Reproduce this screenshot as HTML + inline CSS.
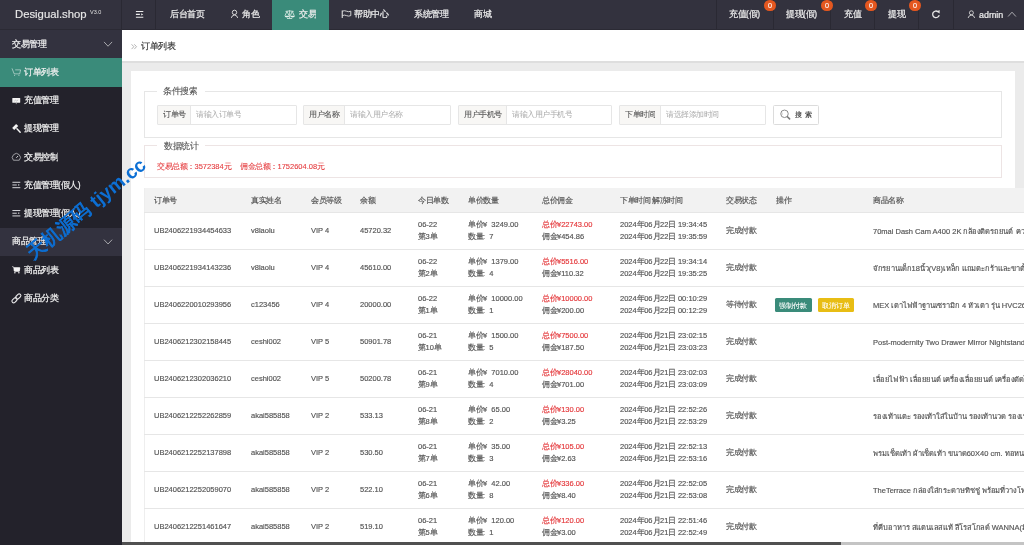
<!DOCTYPE html>
<html><head><meta charset="utf-8"><title>订单列表</title>
<style>
*{margin:0;padding:0;box-sizing:border-box}
html,body{width:1024px;height:545px;overflow:hidden;background:#ebebeb}
#root{position:absolute;left:0;top:0;width:1024px;height:545px;overflow:hidden;will-change:transform;background:#ebebeb;font-family:"Liberation Sans",sans-serif}
.abs{position:absolute}
.tx{position:absolute;white-space:nowrap;transform:scale(0.5);transform-origin:0 0}
.wm{position:absolute;left:35px;top:243px;font-size:19px;line-height:19px;color:#0c6fd4;white-space:nowrap;transform-origin:0 100%;transform:rotate(-39deg);font-weight:bold}
</style></head><body><div id="root">
<div class="abs" style="left:0.00px;top:0.00px;width:1024.00px;height:30.00px;background:#33323e"></div>
<div class="abs" style="left:0.00px;top:29.20px;width:1024.00px;height:0.80px;background:#2b2a34"></div>
<div class="abs" style="left:121.20px;top:0.00px;width:1.00px;height:29.20px;background:#2a2933"></div>
<div class="abs" style="left:155.00px;top:0.00px;width:1.00px;height:29.20px;background:#2a2933"></div>
<div class="abs" style="left:716.10px;top:0.00px;width:1.00px;height:29.20px;background:#2a2933"></div>
<div class="abs" style="left:773.30px;top:0.00px;width:1.00px;height:29.20px;background:#2a2933"></div>
<div class="abs" style="left:830.00px;top:0.00px;width:1.00px;height:29.20px;background:#2a2933"></div>
<div class="abs" style="left:873.90px;top:0.00px;width:1.00px;height:29.20px;background:#2a2933"></div>
<div class="abs" style="left:918.20px;top:0.00px;width:1.00px;height:29.20px;background:#2a2933"></div>
<div class="abs" style="left:952.50px;top:0.00px;width:1.00px;height:29.20px;background:#2a2933"></div>
<div class="abs" style="left:272.00px;top:0.00px;width:57.30px;height:30.00px;background:#3a8b7a"></div>
<div class="tx " style="left:15.40px;top:5.80px;font-size:22.60px;line-height:34.00px;color:#e8e8e8;-webkit-text-stroke:0.30px #e8e8e8">Desigual.shop</div>
<div class="tx " style="left:90.40px;top:8.00px;font-size:11.00px;line-height:16.00px;color:#e0e0e0">V3.0</div>
<div class="tx " style="left:169.50px;top:8.10px;font-size:17.00px;line-height:26.00px;color:#ececec;-webkit-text-stroke:0.44px #ececec">后台首页</div>
<div class="tx " style="left:242.20px;top:8.10px;font-size:17.00px;line-height:26.00px;color:#ececec;-webkit-text-stroke:0.44px #ececec">角色</div>
<div class="tx " style="left:299.20px;top:8.10px;font-size:17.00px;line-height:26.00px;color:#ececec;-webkit-text-stroke:0.44px #ececec">交易</div>
<div class="tx " style="left:354.00px;top:8.10px;font-size:17.00px;line-height:26.00px;color:#ececec;-webkit-text-stroke:0.44px #ececec">帮助中心</div>
<div class="tx " style="left:414.40px;top:8.10px;font-size:17.00px;line-height:26.00px;color:#ececec;-webkit-text-stroke:0.44px #ececec">系统管理</div>
<div class="tx " style="left:474.30px;top:8.10px;font-size:17.00px;line-height:26.00px;color:#ececec;-webkit-text-stroke:0.44px #ececec">商城</div>
<div class="tx " style="left:729.20px;top:8.10px;font-size:17.00px;line-height:26.00px;color:#ececec;-webkit-text-stroke:0.44px #ececec">充值(假)</div>
<div class="tx " style="left:786.40px;top:8.10px;font-size:17.00px;line-height:26.00px;color:#ececec;-webkit-text-stroke:0.44px #ececec">提现(假)</div>
<div class="tx " style="left:843.90px;top:8.10px;font-size:17.00px;line-height:26.00px;color:#ececec;-webkit-text-stroke:0.44px #ececec">充值</div>
<div class="tx " style="left:887.90px;top:8.10px;font-size:17.00px;line-height:26.00px;color:#ececec;-webkit-text-stroke:0.44px #ececec">提现</div>
<div class="tx " style="left:978.60px;top:7.65px;font-size:17.80px;line-height:27.00px;color:#ececec;-webkit-text-stroke:0.44px #ececec">admin</div>
<div class="abs" style="left:763.80px;top:-0.4px;width:11.8px;height:11.8px;border-radius:50%;background:#e4571f"></div>
<div class="tx " style="left:767.65px;top:0.00px;font-size:14.40px;line-height:22.00px;color:#fff;-webkit-text-stroke:0.20px #fff">0</div>
<div class="abs" style="left:821.10px;top:-0.4px;width:11.8px;height:11.8px;border-radius:50%;background:#e4571f"></div>
<div class="tx " style="left:824.95px;top:0.00px;font-size:14.40px;line-height:22.00px;color:#fff;-webkit-text-stroke:0.20px #fff">0</div>
<div class="abs" style="left:865.10px;top:-0.4px;width:11.8px;height:11.8px;border-radius:50%;background:#e4571f"></div>
<div class="tx " style="left:868.95px;top:0.00px;font-size:14.40px;line-height:22.00px;color:#fff;-webkit-text-stroke:0.20px #fff">0</div>
<div class="abs" style="left:909.00px;top:-0.4px;width:11.8px;height:11.8px;border-radius:50%;background:#e4571f"></div>
<div class="tx " style="left:912.85px;top:0.00px;font-size:14.40px;line-height:22.00px;color:#fff;-webkit-text-stroke:0.20px #fff">0</div>
<svg class="abs" style="left:0;top:0" width="1024" height="30" viewBox="0 0 1024 30">
<path d="M135.9 11.5 H143.3 M135.9 14.4 H139.9 M135.9 17.3 H143.3" fill="none" stroke="#ececec" stroke-width="1.1"/><path d="M141.2 13.3 L143.2 14.4 L141.2 15.5 Z" fill="#ececec"/>
<g fill="none" stroke="#e6e6e6" stroke-width="0.9"><circle cx="234.5" cy="12.4" r="2.2"/><path d="M231.3 17.9 Q232.1 15.1 234.5 15 Q236.9 15.1 237.7 17.9"/></g>
<g fill="none" stroke="#dfeee9" stroke-width="0.8"><path d="M285.5 11.4 Q289.6 10.4 293.7 11.4 M289.6 10.2 V18.2 M287 18.5 H292.2 M287 11.3 L285 15.6 M287 11.3 L289 15.6 M292.2 11.3 L290.4 15.6 M292.2 11.3 L294.2 15.6"/></g><path d="M284.6 15.7 H289.3 A2.35 1.7 0 0 1 284.6 15.7 Z M290.2 15.7 H294.9 A2.35 1.7 0 0 1 290.2 15.7 Z" fill="#e4f0ec"/>
<path d="M342.25 10.5 V18" stroke="#e0e0e0" stroke-width="1.1"/><path d="M342.3 11.2 Q344.5 10.2 346.5 11.2 Q348.5 12.2 350.8 11.2 V15.6 Q348.5 16.6 346.5 15.6 Q344.5 14.6 342.3 15.6" fill="none" stroke="#e0e0e0" stroke-width="0.9"/>
<path d="M939.2 15.1 A3.3 3.3 0 1 1 938 11.7" fill="none" stroke="#e6e6e6" stroke-width="1.3"/><path d="M936.4 11.5 L939.6 10.1 L939.6 13.5 Z" fill="#e6e6e6"/>
<g fill="none" stroke="#e0e0e0" stroke-width="0.85"><circle cx="971.4" cy="12.8" r="2"/><path d="M968.1 18 Q968.7 15.3 971.4 15.1 Q974.1 15.3 974.7 18"/></g>
<path d="M1008.1 16.5 L1012 12.2 L1015.9 16.5" fill="none" stroke="#b8b8bc" stroke-width="0.9"/>
</svg>
<div class="abs" style="left:0.00px;top:30.00px;width:122.00px;height:515.00px;background:#23222b"></div>
<div class="abs" style="left:0.00px;top:30.00px;width:122.00px;height:28.25px;background:#33323f"></div>
<div class="abs" style="left:0.00px;top:58.25px;width:122.00px;height:28.25px;background:#3a8b7a"></div>
<div class="abs" style="left:0.00px;top:227.75px;width:122.00px;height:28.25px;background:#33323f"></div>
<div class="tx " style="left:12.00px;top:37.52px;font-size:17.00px;line-height:26.00px;color:#f0f0f0;-webkit-text-stroke:0.44px #f0f0f0">交易管理</div>
<div class="tx " style="left:24.20px;top:65.78px;font-size:17.00px;line-height:26.00px;color:#f0f0f0;-webkit-text-stroke:0.44px #f0f0f0">订单列表</div>
<div class="tx " style="left:24.20px;top:94.03px;font-size:17.00px;line-height:26.00px;color:#f0f0f0;-webkit-text-stroke:0.44px #f0f0f0">充值管理</div>
<div class="tx " style="left:24.20px;top:122.28px;font-size:17.00px;line-height:26.00px;color:#f0f0f0;-webkit-text-stroke:0.44px #f0f0f0">提现管理</div>
<div class="tx " style="left:24.20px;top:150.53px;font-size:17.00px;line-height:26.00px;color:#f0f0f0;-webkit-text-stroke:0.44px #f0f0f0">交易控制</div>
<div class="tx " style="left:24.20px;top:178.78px;font-size:17.00px;line-height:26.00px;color:#f0f0f0;-webkit-text-stroke:0.44px #f0f0f0">充值管理(假人)</div>
<div class="tx " style="left:24.20px;top:207.03px;font-size:17.00px;line-height:26.00px;color:#f0f0f0;-webkit-text-stroke:0.44px #f0f0f0">提现管理(假人)</div>
<div class="tx " style="left:12.00px;top:235.28px;font-size:17.00px;line-height:26.00px;color:#f0f0f0;-webkit-text-stroke:0.44px #f0f0f0">商品管理</div>
<div class="tx " style="left:24.20px;top:263.52px;font-size:17.00px;line-height:26.00px;color:#f0f0f0;-webkit-text-stroke:0.44px #f0f0f0">商品列表</div>
<div class="tx " style="left:24.20px;top:291.77px;font-size:17.00px;line-height:26.00px;color:#f0f0f0;-webkit-text-stroke:0.44px #f0f0f0">商品分类</div>
<svg class="abs" style="left:0;top:0" width="122" height="545" viewBox="0 0 122 545"><path d="M104 41.92 L108.05 46.23 L112.1 41.92" fill="none" stroke="#b4b4b8" stroke-width="0.9"/><path d="M104 239.68 L108.05 243.97 L112.1 239.68" fill="none" stroke="#b4b4b8" stroke-width="0.9"/><g transform="translate(0,-0.03)" fill="none" stroke="rgba(255,255,255,0.62)" stroke-width="0.8"><path d="M12 68.4 L14.2 73.9 H19.7 L20.6 69.9 H15.2"/><circle cx="14.6" cy="75.3" r="0.55" fill="rgba(255,255,255,0.7)" stroke="none"/><circle cx="18.9" cy="75.3" r="0.55" fill="rgba(255,255,255,0.7)" stroke="none"/></g><g transform="translate(0,0.83)"><rect x="12.3" y="97.2" width="7.9" height="4.8" rx="0.5" fill="#f4f4f4"/><rect x="15.8" y="101.9" width="0.9" height="1.4" fill="#999"/><path d="M14.2 100.4 L15.6 99.3 L16.6 100.2 L18.2 99" stroke="#9a9aa0" stroke-width="0.5" fill="none"/></g><g transform="translate(0,-0.03)"><path d="M18.24 126.08 L16.12 123.96 L12.16 127.92 L14.28 130.04 Z" fill="#f4f4f4"/><path d="M16.9 128.7 L20.2 132.3" stroke="#f4f4f4" stroke-width="1.4" stroke-linecap="round"/></g><g transform="translate(0,0.03)" fill="none"><path d="M13.4 160.2 A4 4 0 1 1 19.3 160.2 Z" stroke="#a9a9ae" stroke-width="0.9"/><path d="M16.3 157.8 L18.1 155.9" stroke="#d0d0d4" stroke-width="1"/></g><g transform="translate(0,185.38)" fill="#d4d4d8"><rect x="12.4" y="-3.6" width="7.9" height="1"/><rect x="12.4" y="-0.9" width="4.4" height="1"/><rect x="18.1" y="-1.1" width="1.2" height="1.3"/><rect x="12.4" y="1.8" width="7.9" height="1"/></g><g transform="translate(0,213.62)" fill="#d4d4d8"><rect x="12.4" y="-3.6" width="7.9" height="1"/><rect x="12.4" y="-0.9" width="4.4" height="1"/><rect x="18.1" y="-1.1" width="1.2" height="1.3"/><rect x="12.4" y="1.8" width="7.9" height="1"/></g><g transform="translate(0,270.12)"><path d="M12 -3.6 L13.6 -3.2 L14.6 1.4 H19.2 L20 -2.4 H13.9" fill="#f4f4f4" stroke="#f4f4f4" stroke-width="0.5"/><rect x="13.8" y="-2.6" width="5.9" height="3.4" fill="#f4f4f4"/><circle cx="14.9" cy="2.6" r="0.75" fill="#f4f4f4"/><circle cx="18.9" cy="2.6" r="0.75" fill="#f4f4f4"/></g><g transform="translate(16.4,298.38) rotate(-45)" fill="none" stroke="#e8e8ea" stroke-width="1.1"><rect x="-5.6" y="-1.7" width="6" height="3.4" rx="1.7"/><rect x="-0.4" y="-1.7" width="6" height="3.4" rx="1.7"/></g></svg>
<div class="abs" style="left:122.00px;top:30.00px;width:902.00px;height:515.00px;background:#ebebeb"></div>
<div class="abs" style="left:122.00px;top:61.00px;width:902.00px;height:2.30px;background:#dedede"></div>
<div class="abs" style="left:122.00px;top:30.00px;width:902.00px;height:31.00px;background:#fff"></div>
<svg class="abs" style="left:130px;top:43px" width="8" height="8" viewBox="130 43 8 8"><path d="M131.6 44.3 L133.8 46.7 L131.6 49.1 M134.3 44.3 L136.5 46.7 L134.3 49.1" fill="none" stroke="#a0a0a0" stroke-width="0.8"/></svg>
<div class="tx " style="left:141.00px;top:39.80px;font-size:17.00px;line-height:26.00px;color:#333;-webkit-text-stroke:0.30px #333">订单列表</div>
<div class="abs" style="left:130.50px;top:70.60px;width:884.50px;height:117.00px;background:#fff"></div>
<div class="abs" style="left:130.50px;top:187.60px;width:913.50px;height:360.00px;background:#fff"></div>
<div class="abs" style="left:144.2px;top:91.1px;width:858px;height:46.6px;border:1px solid #e6e6e6"></div>
<div class="abs" style="left:144.2px;top:145.3px;width:858px;height:32.4px;border:1px solid #ede4e4"></div>
<div class="abs" style="left:157.00px;top:86.00px;width:48.00px;height:10.00px;background:#fff"></div>
<div class="abs" style="left:157.00px;top:140.00px;width:48.00px;height:10.00px;background:#fff"></div>
<div class="tx " style="left:163.40px;top:84.80px;font-size:17.00px;line-height:26.00px;color:#555;-webkit-text-stroke:0.24px #555">条件搜索</div>
<div class="tx " style="left:163.60px;top:140.00px;font-size:17.00px;line-height:26.00px;color:#555;-webkit-text-stroke:0.24px #555">数据统计</div>
<div class="abs" style="left:157.30px;top:105.2px;width:139.40px;height:20.2px;border:1px solid #e6e6e6;border-radius:1px;background:#fff"></div>
<div class="abs" style="left:158.30px;top:106.20px;width:31.60px;height:18.20px;background:#f8f7f5"></div>
<div class="abs" style="left:189.90px;top:106.20px;width:0.90px;height:18.20px;background:#e6e6e6"></div>
<div class="tx " style="left:163.20px;top:109.10px;font-size:15.00px;line-height:22.00px;color:#555;-webkit-text-stroke:0.20px #555">订单号</div>
<div class="tx " style="left:195.90px;top:109.10px;font-size:15.00px;line-height:22.00px;color:#aaa">请输入订单号</div>
<div class="abs" style="left:303.30px;top:105.2px;width:147.70px;height:20.2px;border:1px solid #e6e6e6;border-radius:1px;background:#fff"></div>
<div class="abs" style="left:304.30px;top:106.20px;width:40.00px;height:18.20px;background:#f8f7f5"></div>
<div class="abs" style="left:344.30px;top:106.20px;width:0.90px;height:18.20px;background:#e6e6e6"></div>
<div class="tx " style="left:309.20px;top:109.10px;font-size:15.00px;line-height:22.00px;color:#555;-webkit-text-stroke:0.20px #555">用户名称</div>
<div class="tx " style="left:350.30px;top:109.10px;font-size:15.00px;line-height:22.00px;color:#aaa">请输入用户名称</div>
<div class="abs" style="left:457.80px;top:105.2px;width:154.20px;height:20.2px;border:1px solid #e6e6e6;border-radius:1px;background:#fff"></div>
<div class="abs" style="left:458.80px;top:106.20px;width:47.30px;height:18.20px;background:#f8f7f5"></div>
<div class="abs" style="left:506.10px;top:106.20px;width:0.90px;height:18.20px;background:#e6e6e6"></div>
<div class="tx " style="left:463.70px;top:109.10px;font-size:15.00px;line-height:22.00px;color:#555;-webkit-text-stroke:0.20px #555">用户手机号</div>
<div class="tx " style="left:512.10px;top:109.10px;font-size:15.00px;line-height:22.00px;color:#aaa">请输入用户手机号</div>
<div class="abs" style="left:619.00px;top:105.2px;width:147.30px;height:20.2px;border:1px solid #e6e6e6;border-radius:1px;background:#fff"></div>
<div class="abs" style="left:620.00px;top:106.20px;width:39.50px;height:18.20px;background:#f8f7f5"></div>
<div class="abs" style="left:659.50px;top:106.20px;width:0.90px;height:18.20px;background:#e6e6e6"></div>
<div class="tx " style="left:624.90px;top:109.10px;font-size:15.00px;line-height:22.00px;color:#555;-webkit-text-stroke:0.20px #555">下单时间</div>
<div class="tx " style="left:665.50px;top:109.10px;font-size:15.00px;line-height:22.00px;color:#aaa">请选择添加时间</div>
<div class="abs" style="left:773px;top:105.1px;width:46px;height:20.2px;border:1px solid #dcdcdc;border-radius:1.5px;background:#fff"></div>
<svg class="abs" style="left:778px;top:108px" width="14" height="13" viewBox="778 108 14 13"><circle cx="784.5" cy="113.8" r="3.75" fill="none" stroke="#8c8c8c" stroke-width="1.0"/><path d="M787.4 116.7 L789.6 118.9" stroke="#7a7a7a" stroke-width="1.6" stroke-linecap="round"/><path d="M782.2 112.6 V114.9" stroke="#b0b0b0" stroke-width="0.6"/></svg>
<div class="tx " style="left:795.00px;top:108.90px;font-size:14.80px;line-height:22.00px;color:#333;-webkit-text-stroke:0.24px #333">搜</div>
<div class="tx " style="left:804.90px;top:108.90px;font-size:14.80px;line-height:22.00px;color:#333;-webkit-text-stroke:0.24px #333">索</div>
<div class="tx " style="left:157.20px;top:160.70px;font-size:15.00px;line-height:22.00px;color:#e4393c;-webkit-text-stroke:0.16px #e4393c">交易总额：3572384元</div>
<div class="tx " style="left:240.20px;top:160.70px;font-size:15.00px;line-height:22.00px;color:#e4393c;-webkit-text-stroke:0.16px #e4393c">佣金总额：1752604.08元</div>
<div class="abs" style="left:144.30px;top:188.20px;width:899.70px;height:24.00px;background:#f2f2f2"></div>
<div class="abs" style="left:144.30px;top:188.20px;width:0.80px;height:360.00px;background:#eeeeee"></div>
<div class="tx " style="left:153.90px;top:194.80px;font-size:15.00px;line-height:22.00px;color:#555;-webkit-text-stroke:0.32px #555">订单号</div>
<div class="tx " style="left:250.60px;top:194.80px;font-size:15.00px;line-height:22.00px;color:#555;-webkit-text-stroke:0.32px #555">真实姓名</div>
<div class="tx " style="left:311.40px;top:194.80px;font-size:15.00px;line-height:22.00px;color:#555;-webkit-text-stroke:0.32px #555">会员等级</div>
<div class="tx " style="left:360.00px;top:194.80px;font-size:15.00px;line-height:22.00px;color:#555;-webkit-text-stroke:0.32px #555">余额</div>
<div class="tx " style="left:418.40px;top:194.80px;font-size:15.00px;line-height:22.00px;color:#555;-webkit-text-stroke:0.32px #555">今日单数</div>
<div class="tx " style="left:468.00px;top:194.80px;font-size:15.00px;line-height:22.00px;color:#555;-webkit-text-stroke:0.32px #555">单价数量</div>
<div class="tx " style="left:541.60px;top:194.80px;font-size:15.00px;line-height:22.00px;color:#555;-webkit-text-stroke:0.32px #555">总价佣金</div>
<div class="tx " style="left:619.80px;top:194.80px;font-size:15.00px;line-height:22.00px;color:#555;-webkit-text-stroke:0.32px #555">下单时间 解冻时间</div>
<div class="tx " style="left:726.40px;top:194.80px;font-size:15.00px;line-height:22.00px;color:#555;-webkit-text-stroke:0.32px #555">交易状态</div>
<div class="tx " style="left:775.50px;top:194.80px;font-size:15.00px;line-height:22.00px;color:#555;-webkit-text-stroke:0.32px #555">操作</div>
<div class="tx " style="left:873.40px;top:194.80px;font-size:15.00px;line-height:22.00px;color:#555;-webkit-text-stroke:0.32px #555">商品名称</div>
<div class="abs" style="left:144.30px;top:212.20px;width:899.70px;height:0.90px;background:#e6e6e6"></div>
<div class="tx " style="left:153.90px;top:225.25px;font-size:15.00px;line-height:22.00px;color:#555;-webkit-text-stroke:0.32px #555">UB2406221934454633</div>
<div class="tx " style="left:250.60px;top:225.25px;font-size:15.00px;line-height:22.00px;color:#555;-webkit-text-stroke:0.32px #555">v8laolu</div>
<div class="tx " style="left:311.40px;top:225.25px;font-size:15.00px;line-height:22.00px;color:#555;-webkit-text-stroke:0.32px #555">VIP 4</div>
<div class="tx " style="left:360.00px;top:225.25px;font-size:15.00px;line-height:22.00px;color:#555;-webkit-text-stroke:0.32px #555">45720.32</div>
<div class="tx " style="left:418.40px;top:218.70px;font-size:15.00px;line-height:22.00px;color:#555;-webkit-text-stroke:0.32px #555">06-22</div>
<div class="tx " style="left:418.40px;top:230.50px;font-size:15.00px;line-height:22.00px;color:#555;-webkit-text-stroke:0.32px #555">第3单</div>
<div class="tx " style="left:468.00px;top:218.70px;font-size:15.00px;line-height:22.00px;color:#555;-webkit-text-stroke:0.32px #555">单价¥&nbsp; 3249.00</div>
<div class="tx " style="left:468.00px;top:230.50px;font-size:15.00px;line-height:22.00px;color:#555;-webkit-text-stroke:0.32px #555">数量:&nbsp;&nbsp;7</div>
<div class="tx " style="left:541.60px;top:218.70px;font-size:15.00px;line-height:22.00px;color:#e4393c;-webkit-text-stroke:0.32px #e4393c">总价¥22743.00</div>
<div class="tx " style="left:541.60px;top:230.50px;font-size:15.00px;line-height:22.00px;color:#555;-webkit-text-stroke:0.32px #555">佣金¥454.86</div>
<div class="tx " style="left:619.80px;top:218.70px;font-size:15.00px;line-height:22.00px;color:#555;-webkit-text-stroke:0.32px #555">2024年06月22日 19:34:45</div>
<div class="tx " style="left:619.80px;top:230.50px;font-size:15.00px;line-height:22.00px;color:#555;-webkit-text-stroke:0.32px #555">2024年06月22日 19:35:59</div>
<div class="tx " style="left:726.40px;top:225.25px;font-size:15.00px;line-height:22.00px;color:#555;-webkit-text-stroke:0.32px #555">完成付款</div>
<div class="tx " style="left:873.40px;top:225.85px;font-size:15.00px;line-height:22.00px;color:#555;-webkit-text-stroke:0.32px #555">70mai Dash Cam A400 2K กล้องติดรถยนต์ ความละเอียด 2K</div>
<div class="abs" style="left:144.30px;top:249.20px;width:899.70px;height:0.90px;background:#e6e6e6"></div>
<div class="tx " style="left:153.90px;top:262.25px;font-size:15.00px;line-height:22.00px;color:#555;-webkit-text-stroke:0.32px #555">UB2406221934143236</div>
<div class="tx " style="left:250.60px;top:262.25px;font-size:15.00px;line-height:22.00px;color:#555;-webkit-text-stroke:0.32px #555">v8laolu</div>
<div class="tx " style="left:311.40px;top:262.25px;font-size:15.00px;line-height:22.00px;color:#555;-webkit-text-stroke:0.32px #555">VIP 4</div>
<div class="tx " style="left:360.00px;top:262.25px;font-size:15.00px;line-height:22.00px;color:#555;-webkit-text-stroke:0.32px #555">45610.00</div>
<div class="tx " style="left:418.40px;top:255.70px;font-size:15.00px;line-height:22.00px;color:#555;-webkit-text-stroke:0.32px #555">06-22</div>
<div class="tx " style="left:418.40px;top:267.50px;font-size:15.00px;line-height:22.00px;color:#555;-webkit-text-stroke:0.32px #555">第2单</div>
<div class="tx " style="left:468.00px;top:255.70px;font-size:15.00px;line-height:22.00px;color:#555;-webkit-text-stroke:0.32px #555">单价¥&nbsp; 1379.00</div>
<div class="tx " style="left:468.00px;top:267.50px;font-size:15.00px;line-height:22.00px;color:#555;-webkit-text-stroke:0.32px #555">数量:&nbsp;&nbsp;4</div>
<div class="tx " style="left:541.60px;top:255.70px;font-size:15.00px;line-height:22.00px;color:#e4393c;-webkit-text-stroke:0.32px #e4393c">总价¥5516.00</div>
<div class="tx " style="left:541.60px;top:267.50px;font-size:15.00px;line-height:22.00px;color:#555;-webkit-text-stroke:0.32px #555">佣金¥110.32</div>
<div class="tx " style="left:619.80px;top:255.70px;font-size:15.00px;line-height:22.00px;color:#555;-webkit-text-stroke:0.32px #555">2024年06月22日 19:34:14</div>
<div class="tx " style="left:619.80px;top:267.50px;font-size:15.00px;line-height:22.00px;color:#555;-webkit-text-stroke:0.32px #555">2024年06月22日 19:35:25</div>
<div class="tx " style="left:726.40px;top:262.25px;font-size:15.00px;line-height:22.00px;color:#555;-webkit-text-stroke:0.32px #555">完成付款</div>
<div class="tx " style="left:873.40px;top:262.85px;font-size:15.00px;line-height:22.00px;color:#555;-webkit-text-stroke:0.32px #555">จักรยานเด็ก18นิ้ว(V8)เหล็ก แถมตะกร้าและขาตั้ง แข็งแรง</div>
<div class="abs" style="left:144.30px;top:286.20px;width:899.70px;height:0.90px;background:#e6e6e6"></div>
<div class="tx " style="left:153.90px;top:299.25px;font-size:15.00px;line-height:22.00px;color:#555;-webkit-text-stroke:0.32px #555">UB2406220010293956</div>
<div class="tx " style="left:250.60px;top:299.25px;font-size:15.00px;line-height:22.00px;color:#555;-webkit-text-stroke:0.32px #555">c123456</div>
<div class="tx " style="left:311.40px;top:299.25px;font-size:15.00px;line-height:22.00px;color:#555;-webkit-text-stroke:0.32px #555">VIP 4</div>
<div class="tx " style="left:360.00px;top:299.25px;font-size:15.00px;line-height:22.00px;color:#555;-webkit-text-stroke:0.32px #555">20000.00</div>
<div class="tx " style="left:418.40px;top:292.70px;font-size:15.00px;line-height:22.00px;color:#555;-webkit-text-stroke:0.32px #555">06-22</div>
<div class="tx " style="left:418.40px;top:304.50px;font-size:15.00px;line-height:22.00px;color:#555;-webkit-text-stroke:0.32px #555">第1单</div>
<div class="tx " style="left:468.00px;top:292.70px;font-size:15.00px;line-height:22.00px;color:#555;-webkit-text-stroke:0.32px #555">单价¥&nbsp; 10000.00</div>
<div class="tx " style="left:468.00px;top:304.50px;font-size:15.00px;line-height:22.00px;color:#555;-webkit-text-stroke:0.32px #555">数量:&nbsp;&nbsp;1</div>
<div class="tx " style="left:541.60px;top:292.70px;font-size:15.00px;line-height:22.00px;color:#e4393c;-webkit-text-stroke:0.32px #e4393c">总价¥10000.00</div>
<div class="tx " style="left:541.60px;top:304.50px;font-size:15.00px;line-height:22.00px;color:#555;-webkit-text-stroke:0.32px #555">佣金¥200.00</div>
<div class="tx " style="left:619.80px;top:292.70px;font-size:15.00px;line-height:22.00px;color:#555;-webkit-text-stroke:0.32px #555">2024年06月22日 00:10:29</div>
<div class="tx " style="left:619.80px;top:304.50px;font-size:15.00px;line-height:22.00px;color:#555;-webkit-text-stroke:0.32px #555">2024年06月22日 00:12:29</div>
<div class="tx " style="left:726.40px;top:299.25px;font-size:15.00px;line-height:22.00px;color:#555;-webkit-text-stroke:0.32px #555">等待付款</div>
<div class="abs" style="left:775.20px;top:298.20px;width:36.60px;height:13.70px;background:#3a8b7a;border-radius:1.5px"></div>
<div class="abs" style="left:817.80px;top:298.20px;width:36.50px;height:13.70px;background:#e8bd14;border-radius:1.5px"></div>
<div class="tx " style="left:779.30px;top:299.55px;font-size:14.40px;line-height:22.00px;color:#fff;-webkit-text-stroke:0.20px #fff">强制付款</div>
<div class="tx " style="left:821.90px;top:299.55px;font-size:14.40px;line-height:22.00px;color:#fff;-webkit-text-stroke:0.20px #fff">取消订单</div>
<div class="tx " style="left:873.40px;top:299.85px;font-size:15.00px;line-height:22.00px;color:#555;-webkit-text-stroke:0.32px #555">MEX เตาไฟฟ้าฐานเซรามิก 4 หัวเตา รุ่น HVC264</div>
<div class="abs" style="left:144.30px;top:323.20px;width:899.70px;height:0.90px;background:#e6e6e6"></div>
<div class="tx " style="left:153.90px;top:336.25px;font-size:15.00px;line-height:22.00px;color:#555;-webkit-text-stroke:0.32px #555">UB2406212302158445</div>
<div class="tx " style="left:250.60px;top:336.25px;font-size:15.00px;line-height:22.00px;color:#555;-webkit-text-stroke:0.32px #555">ceshi002</div>
<div class="tx " style="left:311.40px;top:336.25px;font-size:15.00px;line-height:22.00px;color:#555;-webkit-text-stroke:0.32px #555">VIP 5</div>
<div class="tx " style="left:360.00px;top:336.25px;font-size:15.00px;line-height:22.00px;color:#555;-webkit-text-stroke:0.32px #555">50901.78</div>
<div class="tx " style="left:418.40px;top:329.70px;font-size:15.00px;line-height:22.00px;color:#555;-webkit-text-stroke:0.32px #555">06-21</div>
<div class="tx " style="left:418.40px;top:341.50px;font-size:15.00px;line-height:22.00px;color:#555;-webkit-text-stroke:0.32px #555">第10单</div>
<div class="tx " style="left:468.00px;top:329.70px;font-size:15.00px;line-height:22.00px;color:#555;-webkit-text-stroke:0.32px #555">单价¥&nbsp; 1500.00</div>
<div class="tx " style="left:468.00px;top:341.50px;font-size:15.00px;line-height:22.00px;color:#555;-webkit-text-stroke:0.32px #555">数量:&nbsp;&nbsp;5</div>
<div class="tx " style="left:541.60px;top:329.70px;font-size:15.00px;line-height:22.00px;color:#e4393c;-webkit-text-stroke:0.32px #e4393c">总价¥7500.00</div>
<div class="tx " style="left:541.60px;top:341.50px;font-size:15.00px;line-height:22.00px;color:#555;-webkit-text-stroke:0.32px #555">佣金¥187.50</div>
<div class="tx " style="left:619.80px;top:329.70px;font-size:15.00px;line-height:22.00px;color:#555;-webkit-text-stroke:0.32px #555">2024年06月21日 23:02:15</div>
<div class="tx " style="left:619.80px;top:341.50px;font-size:15.00px;line-height:22.00px;color:#555;-webkit-text-stroke:0.32px #555">2024年06月21日 23:03:23</div>
<div class="tx " style="left:726.40px;top:336.25px;font-size:15.00px;line-height:22.00px;color:#555;-webkit-text-stroke:0.32px #555">完成付款</div>
<div class="tx " style="left:873.40px;top:336.85px;font-size:15.00px;line-height:22.00px;color:#555;-webkit-text-stroke:0.32px #555">Post-modernity Two Drawer Mirror Nightstand</div>
<div class="abs" style="left:144.30px;top:360.20px;width:899.70px;height:0.90px;background:#e6e6e6"></div>
<div class="tx " style="left:153.90px;top:373.25px;font-size:15.00px;line-height:22.00px;color:#555;-webkit-text-stroke:0.32px #555">UB2406212302036210</div>
<div class="tx " style="left:250.60px;top:373.25px;font-size:15.00px;line-height:22.00px;color:#555;-webkit-text-stroke:0.32px #555">ceshi002</div>
<div class="tx " style="left:311.40px;top:373.25px;font-size:15.00px;line-height:22.00px;color:#555;-webkit-text-stroke:0.32px #555">VIP 5</div>
<div class="tx " style="left:360.00px;top:373.25px;font-size:15.00px;line-height:22.00px;color:#555;-webkit-text-stroke:0.32px #555">50200.78</div>
<div class="tx " style="left:418.40px;top:366.70px;font-size:15.00px;line-height:22.00px;color:#555;-webkit-text-stroke:0.32px #555">06-21</div>
<div class="tx " style="left:418.40px;top:378.50px;font-size:15.00px;line-height:22.00px;color:#555;-webkit-text-stroke:0.32px #555">第9单</div>
<div class="tx " style="left:468.00px;top:366.70px;font-size:15.00px;line-height:22.00px;color:#555;-webkit-text-stroke:0.32px #555">单价¥&nbsp; 7010.00</div>
<div class="tx " style="left:468.00px;top:378.50px;font-size:15.00px;line-height:22.00px;color:#555;-webkit-text-stroke:0.32px #555">数量:&nbsp;&nbsp;4</div>
<div class="tx " style="left:541.60px;top:366.70px;font-size:15.00px;line-height:22.00px;color:#e4393c;-webkit-text-stroke:0.32px #e4393c">总价¥28040.00</div>
<div class="tx " style="left:541.60px;top:378.50px;font-size:15.00px;line-height:22.00px;color:#555;-webkit-text-stroke:0.32px #555">佣金¥701.00</div>
<div class="tx " style="left:619.80px;top:366.70px;font-size:15.00px;line-height:22.00px;color:#555;-webkit-text-stroke:0.32px #555">2024年06月21日 23:02:03</div>
<div class="tx " style="left:619.80px;top:378.50px;font-size:15.00px;line-height:22.00px;color:#555;-webkit-text-stroke:0.32px #555">2024年06月21日 23:03:09</div>
<div class="tx " style="left:726.40px;top:373.25px;font-size:15.00px;line-height:22.00px;color:#555;-webkit-text-stroke:0.32px #555">完成付款</div>
<div class="tx " style="left:873.40px;top:373.85px;font-size:15.00px;line-height:22.00px;color:#555;-webkit-text-stroke:0.32px #555">เลื่อยไฟฟ้า เลื่อยยนต์ เครื่องเลื่อยยนต์ เครื่องตัดไม้</div>
<div class="abs" style="left:144.30px;top:397.20px;width:899.70px;height:0.90px;background:#e6e6e6"></div>
<div class="tx " style="left:153.90px;top:410.25px;font-size:15.00px;line-height:22.00px;color:#555;-webkit-text-stroke:0.32px #555">UB2406212252262859</div>
<div class="tx " style="left:250.60px;top:410.25px;font-size:15.00px;line-height:22.00px;color:#555;-webkit-text-stroke:0.32px #555">akai585858</div>
<div class="tx " style="left:311.40px;top:410.25px;font-size:15.00px;line-height:22.00px;color:#555;-webkit-text-stroke:0.32px #555">VIP 2</div>
<div class="tx " style="left:360.00px;top:410.25px;font-size:15.00px;line-height:22.00px;color:#555;-webkit-text-stroke:0.32px #555">533.13</div>
<div class="tx " style="left:418.40px;top:403.70px;font-size:15.00px;line-height:22.00px;color:#555;-webkit-text-stroke:0.32px #555">06-21</div>
<div class="tx " style="left:418.40px;top:415.50px;font-size:15.00px;line-height:22.00px;color:#555;-webkit-text-stroke:0.32px #555">第8单</div>
<div class="tx " style="left:468.00px;top:403.70px;font-size:15.00px;line-height:22.00px;color:#555;-webkit-text-stroke:0.32px #555">单价¥&nbsp; 65.00</div>
<div class="tx " style="left:468.00px;top:415.50px;font-size:15.00px;line-height:22.00px;color:#555;-webkit-text-stroke:0.32px #555">数量:&nbsp;&nbsp;2</div>
<div class="tx " style="left:541.60px;top:403.70px;font-size:15.00px;line-height:22.00px;color:#e4393c;-webkit-text-stroke:0.32px #e4393c">总价¥130.00</div>
<div class="tx " style="left:541.60px;top:415.50px;font-size:15.00px;line-height:22.00px;color:#555;-webkit-text-stroke:0.32px #555">佣金¥3.25</div>
<div class="tx " style="left:619.80px;top:403.70px;font-size:15.00px;line-height:22.00px;color:#555;-webkit-text-stroke:0.32px #555">2024年06月21日 22:52:26</div>
<div class="tx " style="left:619.80px;top:415.50px;font-size:15.00px;line-height:22.00px;color:#555;-webkit-text-stroke:0.32px #555">2024年06月21日 22:53:29</div>
<div class="tx " style="left:726.40px;top:410.25px;font-size:15.00px;line-height:22.00px;color:#555;-webkit-text-stroke:0.32px #555">完成付款</div>
<div class="tx " style="left:873.40px;top:410.85px;font-size:15.00px;line-height:22.00px;color:#555;-webkit-text-stroke:0.32px #555">รองเท้าแตะ รองเท้าใส่ในบ้าน รองเท้านวด รองเท้าสุขภาพ</div>
<div class="abs" style="left:144.30px;top:434.20px;width:899.70px;height:0.90px;background:#e6e6e6"></div>
<div class="tx " style="left:153.90px;top:447.25px;font-size:15.00px;line-height:22.00px;color:#555;-webkit-text-stroke:0.32px #555">UB2406212252137898</div>
<div class="tx " style="left:250.60px;top:447.25px;font-size:15.00px;line-height:22.00px;color:#555;-webkit-text-stroke:0.32px #555">akai585858</div>
<div class="tx " style="left:311.40px;top:447.25px;font-size:15.00px;line-height:22.00px;color:#555;-webkit-text-stroke:0.32px #555">VIP 2</div>
<div class="tx " style="left:360.00px;top:447.25px;font-size:15.00px;line-height:22.00px;color:#555;-webkit-text-stroke:0.32px #555">530.50</div>
<div class="tx " style="left:418.40px;top:440.70px;font-size:15.00px;line-height:22.00px;color:#555;-webkit-text-stroke:0.32px #555">06-21</div>
<div class="tx " style="left:418.40px;top:452.50px;font-size:15.00px;line-height:22.00px;color:#555;-webkit-text-stroke:0.32px #555">第7单</div>
<div class="tx " style="left:468.00px;top:440.70px;font-size:15.00px;line-height:22.00px;color:#555;-webkit-text-stroke:0.32px #555">单价¥&nbsp; 35.00</div>
<div class="tx " style="left:468.00px;top:452.50px;font-size:15.00px;line-height:22.00px;color:#555;-webkit-text-stroke:0.32px #555">数量:&nbsp;&nbsp;3</div>
<div class="tx " style="left:541.60px;top:440.70px;font-size:15.00px;line-height:22.00px;color:#e4393c;-webkit-text-stroke:0.32px #e4393c">总价¥105.00</div>
<div class="tx " style="left:541.60px;top:452.50px;font-size:15.00px;line-height:22.00px;color:#555;-webkit-text-stroke:0.32px #555">佣金¥2.63</div>
<div class="tx " style="left:619.80px;top:440.70px;font-size:15.00px;line-height:22.00px;color:#555;-webkit-text-stroke:0.32px #555">2024年06月21日 22:52:13</div>
<div class="tx " style="left:619.80px;top:452.50px;font-size:15.00px;line-height:22.00px;color:#555;-webkit-text-stroke:0.32px #555">2024年06月21日 22:53:16</div>
<div class="tx " style="left:726.40px;top:447.25px;font-size:15.00px;line-height:22.00px;color:#555;-webkit-text-stroke:0.32px #555">完成付款</div>
<div class="tx " style="left:873.40px;top:447.85px;font-size:15.00px;line-height:22.00px;color:#555;-webkit-text-stroke:0.32px #555">พรมเช็ดเท้า ผ้าเช็ดเท้า ขนาด60X40 cm. ทอหนาพิเศษ</div>
<div class="abs" style="left:144.30px;top:471.20px;width:899.70px;height:0.90px;background:#e6e6e6"></div>
<div class="tx " style="left:153.90px;top:484.25px;font-size:15.00px;line-height:22.00px;color:#555;-webkit-text-stroke:0.32px #555">UB2406212252059070</div>
<div class="tx " style="left:250.60px;top:484.25px;font-size:15.00px;line-height:22.00px;color:#555;-webkit-text-stroke:0.32px #555">akai585858</div>
<div class="tx " style="left:311.40px;top:484.25px;font-size:15.00px;line-height:22.00px;color:#555;-webkit-text-stroke:0.32px #555">VIP 2</div>
<div class="tx " style="left:360.00px;top:484.25px;font-size:15.00px;line-height:22.00px;color:#555;-webkit-text-stroke:0.32px #555">522.10</div>
<div class="tx " style="left:418.40px;top:477.70px;font-size:15.00px;line-height:22.00px;color:#555;-webkit-text-stroke:0.32px #555">06-21</div>
<div class="tx " style="left:418.40px;top:489.50px;font-size:15.00px;line-height:22.00px;color:#555;-webkit-text-stroke:0.32px #555">第6单</div>
<div class="tx " style="left:468.00px;top:477.70px;font-size:15.00px;line-height:22.00px;color:#555;-webkit-text-stroke:0.32px #555">单价¥&nbsp; 42.00</div>
<div class="tx " style="left:468.00px;top:489.50px;font-size:15.00px;line-height:22.00px;color:#555;-webkit-text-stroke:0.32px #555">数量:&nbsp;&nbsp;8</div>
<div class="tx " style="left:541.60px;top:477.70px;font-size:15.00px;line-height:22.00px;color:#e4393c;-webkit-text-stroke:0.32px #e4393c">总价¥336.00</div>
<div class="tx " style="left:541.60px;top:489.50px;font-size:15.00px;line-height:22.00px;color:#555;-webkit-text-stroke:0.32px #555">佣金¥8.40</div>
<div class="tx " style="left:619.80px;top:477.70px;font-size:15.00px;line-height:22.00px;color:#555;-webkit-text-stroke:0.32px #555">2024年06月21日 22:52:05</div>
<div class="tx " style="left:619.80px;top:489.50px;font-size:15.00px;line-height:22.00px;color:#555;-webkit-text-stroke:0.32px #555">2024年06月21日 22:53:08</div>
<div class="tx " style="left:726.40px;top:484.25px;font-size:15.00px;line-height:22.00px;color:#555;-webkit-text-stroke:0.32px #555">完成付款</div>
<div class="tx " style="left:873.40px;top:484.85px;font-size:15.00px;line-height:22.00px;color:#555;-webkit-text-stroke:0.32px #555">TheTerrace กล่องใส่กระดาษทิชชู่ พร้อมที่วางโทรศัพท์</div>
<div class="abs" style="left:144.30px;top:508.20px;width:899.70px;height:0.90px;background:#e6e6e6"></div>
<div class="tx " style="left:153.90px;top:521.25px;font-size:15.00px;line-height:22.00px;color:#555;-webkit-text-stroke:0.32px #555">UB2406212251461647</div>
<div class="tx " style="left:250.60px;top:521.25px;font-size:15.00px;line-height:22.00px;color:#555;-webkit-text-stroke:0.32px #555">akai585858</div>
<div class="tx " style="left:311.40px;top:521.25px;font-size:15.00px;line-height:22.00px;color:#555;-webkit-text-stroke:0.32px #555">VIP 2</div>
<div class="tx " style="left:360.00px;top:521.25px;font-size:15.00px;line-height:22.00px;color:#555;-webkit-text-stroke:0.32px #555">519.10</div>
<div class="tx " style="left:418.40px;top:514.70px;font-size:15.00px;line-height:22.00px;color:#555;-webkit-text-stroke:0.32px #555">06-21</div>
<div class="tx " style="left:418.40px;top:526.50px;font-size:15.00px;line-height:22.00px;color:#555;-webkit-text-stroke:0.32px #555">第5单</div>
<div class="tx " style="left:468.00px;top:514.70px;font-size:15.00px;line-height:22.00px;color:#555;-webkit-text-stroke:0.32px #555">单价¥&nbsp; 120.00</div>
<div class="tx " style="left:468.00px;top:526.50px;font-size:15.00px;line-height:22.00px;color:#555;-webkit-text-stroke:0.32px #555">数量:&nbsp;&nbsp;1</div>
<div class="tx " style="left:541.60px;top:514.70px;font-size:15.00px;line-height:22.00px;color:#e4393c;-webkit-text-stroke:0.32px #e4393c">总价¥120.00</div>
<div class="tx " style="left:541.60px;top:526.50px;font-size:15.00px;line-height:22.00px;color:#555;-webkit-text-stroke:0.32px #555">佣金¥3.00</div>
<div class="tx " style="left:619.80px;top:514.70px;font-size:15.00px;line-height:22.00px;color:#555;-webkit-text-stroke:0.32px #555">2024年06月21日 22:51:46</div>
<div class="tx " style="left:619.80px;top:526.50px;font-size:15.00px;line-height:22.00px;color:#555;-webkit-text-stroke:0.32px #555">2024年06月21日 22:52:49</div>
<div class="tx " style="left:726.40px;top:521.25px;font-size:15.00px;line-height:22.00px;color:#555;-webkit-text-stroke:0.32px #555">完成付款</div>
<div class="tx " style="left:873.40px;top:521.85px;font-size:15.00px;line-height:22.00px;color:#555;-webkit-text-stroke:0.32px #555">ที่คีบอาหาร สแตนเลสแท้ สีโรสโกลด์ WANNA(มีไซส์)</div>
<div class="abs" style="left:122.00px;top:541.50px;width:902.00px;height:3.50px;background:#c4c4c4"></div>
<div class="abs" style="left:122.00px;top:541.50px;width:718.50px;height:3.50px;background:#505050"></div>
<div class="wm"><span style="font-weight:normal;-webkit-text-stroke:0.8px #0c6fd4">天机源码</span> tjym.cc</div>
</div></body></html>
